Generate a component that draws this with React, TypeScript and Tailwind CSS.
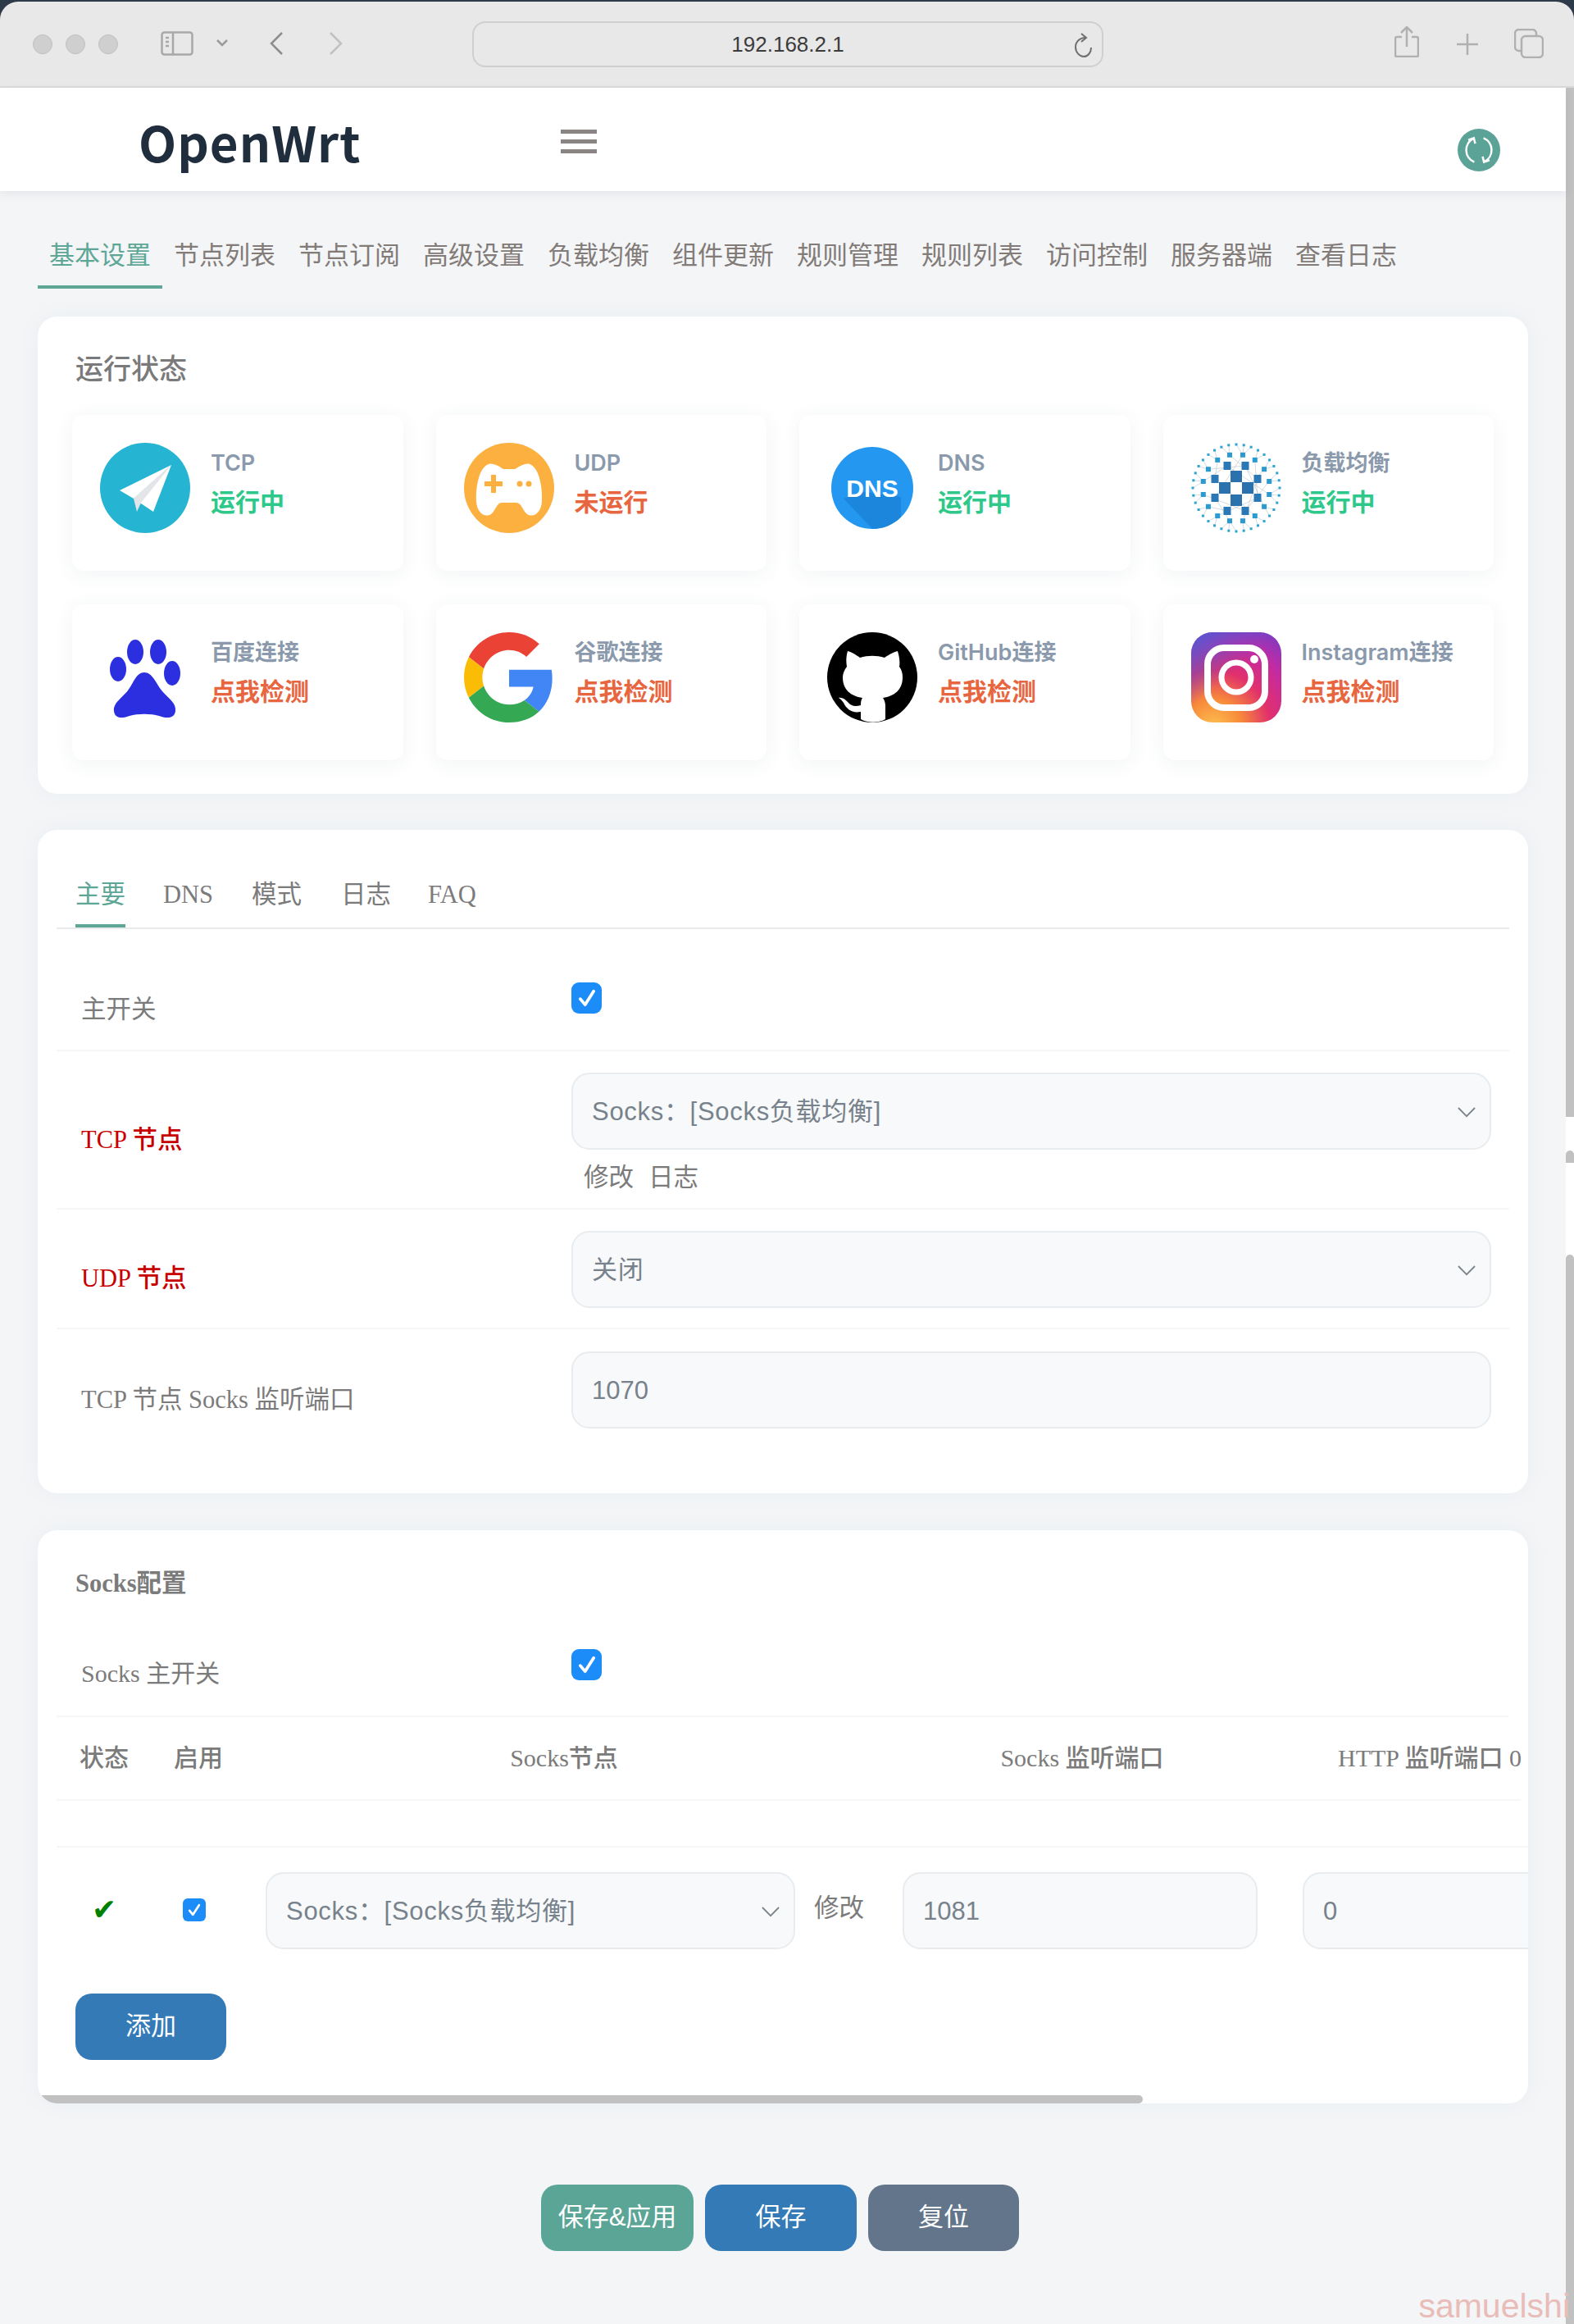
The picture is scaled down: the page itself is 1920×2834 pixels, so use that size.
import type { ReactNode } from "react";

const tabs = ["基本设置", "节点列表", "节点订阅", "高级设置", "负载均衡", "组件更新", "规则管理", "规则列表", "访问控制", "服务器端", "查看日志"];

const PlaneIcon = () => (
  <svg viewBox="0 0 110 110" className="w-full h-full">
    <circle cx="55" cy="55" r="55" fill="#25b5d3" />
    <polygon points="87,27 24,58 41,68" fill="#fff" />
    <polygon points="87,27 41,68 65,84" fill="#fff" />
    <polygon points="87,27 41,68 45,84 50,73" fill="#e3e5e8" />
  </svg>
);

const GamepadIcon = () => (
  <svg viewBox="0 0 110 110" className="w-full h-full">
    <circle cx="55" cy="55" r="55" fill="#fbb040" />
    <path d="M30 26C35 24 45 30 48 32L62 32C66 30 75 24 80 26C92 30 96 55 95 72C94 85 85 92 77 87C71 82 70 73 64 73L46 73C40 73 39 82 33 87C25 92 16 85 15 72C14 55 18 30 30 26Z" fill="#fff" />
    <path d="M33 39h6v8h8v6h-8v8h-6v-8h-8v-6h8z" fill="#fbb040" />
    <circle cx="68" cy="50" r="3.5" fill="#fbb040" />
    <circle cx="79" cy="50" r="3.5" fill="#fbb040" />
  </svg>
);

const DnsIcon = () => (
  <svg viewBox="0 0 110 110" className="w-full h-full">
    <defs>
      <clipPath id="dnsClip">
        <circle cx="55" cy="55" r="50" />
      </clipPath>
    </defs>
    <circle cx="55" cy="55" r="50" fill="#2498f0" />
    <polygon points="20,68 45,60 90,66 90,110 60,110" fill="#1c86dc" clipPath="url(#dnsClip)" />
    <text x="55" y="66" textAnchor="middle" fontSize="30" fontWeight="700" fill="#fff" fontFamily="'Liberation Sans',sans-serif">DNS</text>
  </svg>
);

const LoadBalanceIcon = () => {
  const big = [[0, -14], [0, 15], [-14, 0], [14, 0]];
  const mid = [[-11, -27], [11, -27], [-26, -11], [26, -11], [-26, 12], [26, 12], [-11, 28], [11, 28]];
  const ring = Array.from({ length: 16 }, (_, i) => {
    const a = ((i + 0.5) / 16) * Math.PI * 2;
    return [Math.cos(a) * 41, Math.sin(a) * 41];
  });
  const outer = Array.from({ length: 36 }, (_, i) => {
    const a = (i / 36) * Math.PI * 2;
    return [Math.cos(a) * 53, Math.sin(a) * 53];
  });
  return (
    <svg viewBox="-55 -55 110 110" className="w-full h-full">
      <g stroke="#a9b4bd" strokeWidth="0.5">
        {ring.map(([x, y], i) => (
          <line key={i} x1={x} y1={y} x2={mid[i % 8][0]} y2={mid[i % 8][1]} />
        ))}
        {outer.map(([x, y], i) => (
          <line key={i} x1={x} y1={y} x2={ring[Math.floor(i / 2.25)][0]} y2={ring[Math.floor(i / 2.25)][1]} />
        ))}
      </g>
      {big.map(([x, y], i) => (
        <rect key={i} x={x - 7} y={y - 7} width="14" height="14" fill="#2a72ae" />
      ))}
      {mid.map(([x, y], i) => (
        <rect key={i} x={x - 4.5} y={y - 5} width="9" height="10" fill="#2a78b5" />
      ))}
      {ring.map(([x, y], i) => (
        <rect key={i} x={x - 3} y={y - 3} width="6" height="6" fill="#2a9ad0" />
      ))}
      {outer.map(([x, y], i) => (
        <rect key={i} x={x - 1.5} y={y - 1.5} width="3" height="3" fill="#2ba5d3" />
      ))}
    </svg>
  );
};

const PawIcon = () => (
  <svg viewBox="0 0 110 110" className="w-full h-full">
    <g fill="#2b2fe0">
      <ellipse cx="22" cy="45" rx="10" ry="15" />
      <ellipse cx="43" cy="24" rx="10" ry="15" />
      <ellipse cx="71" cy="24" rx="10" ry="15" />
      <ellipse cx="88" cy="50" rx="10" ry="15" />
      <path d="M54 49C64 49 68 62 76 72C84 81 93 86 92 96C91 106 80 105 72 102C62 99 46 99 36 102C28 105 18 106 17 96C16 86 27 80 34 71C41 62 44 49 54 49Z" />
    </g>
  </svg>
);

const GoogleIcon = () => (
  <svg viewBox="0 0 48 48" className="w-full h-full">
    <path fill="#EA4335" d="M24 9.5c3.54 0 6.71 1.22 9.21 3.6l6.85-6.85C35.9 2.38 30.47 0 24 0 14.62 0 6.51 5.38 2.56 13.22l7.98 6.19C12.43 13.72 17.74 9.5 24 9.5z" />
    <path fill="#4285F4" d="M46.98 24.55c0-1.57-.15-3.09-.38-4.55H24v9.02h12.94c-.58 2.96-2.26 5.48-4.78 7.18l7.73 6c4.51-4.18 7.09-10.36 7.09-17.65z" />
    <path fill="#FBBC05" d="M10.53 28.59c-.48-1.45-.76-2.99-.76-4.59s.27-3.14.76-4.59l-7.98-6.19C.92 16.46 0 20.12 0 24c0 3.88.92 7.54 2.56 10.78l7.97-6.19z" />
    <path fill="#34A853" d="M24 48c6.48 0 11.93-2.13 15.89-5.81l-7.73-6c-2.15 1.45-4.92 2.3-8.16 2.3-6.26 0-11.57-4.22-13.47-9.91l-7.98 6.19C6.51 42.62 14.62 48 24 48z" />
  </svg>
);

const InstagramIcon = () => (
  <svg viewBox="0 0 110 110" className="w-full h-full">
    <defs>
      <radialGradient id="igBase" cx="0.25" cy="1.05" r="1.25">
        <stop offset="0" stopColor="#fdc04f" />
        <stop offset="0.25" stopColor="#f78a3a" />
        <stop offset="0.5" stopColor="#e1306c" />
        <stop offset="0.75" stopColor="#c32aa3" />
        <stop offset="1" stopColor="#7a3cc4" />
      </radialGradient>
      <linearGradient id="igTop" x1="0" y1="0" x2="0.4" y2="0.5">
        <stop offset="0" stopColor="#4f5bd5" />
        <stop offset="1" stopColor="#4f5bd5" stopOpacity="0" />
      </linearGradient>
    </defs>
    <rect width="110" height="110" rx="26" fill="url(#igBase)" />
    <rect width="110" height="110" rx="26" fill="url(#igTop)" />
    <rect x="20" y="19" width="70" height="73" rx="20" fill="none" stroke="#fff" strokeWidth="8" />
    <circle cx="55" cy="55" r="18" fill="none" stroke="#fff" strokeWidth="7" />
    <circle cx="77" cy="33" r="5" fill="#fff" />
  </svg>
);

const GithubIcon = () => (
  <svg viewBox="0 0 110 110" className="w-full h-full">
    <defs>
      <clipPath id="ghClip">
        <circle cx="55" cy="55" r="55" />
      </clipPath>
    </defs>
    <circle cx="55" cy="55" r="55" fill="#000" />
    <path clipPath="url(#ghClip)" fill="#fff" d="M25 23C30 24 36 28 40 31C50 28 60 28 70 31C74 28 81 24 86 23C88 30 89 36 88 42C91 46 92 50 92 55C92 70 82 78 68 80C70 83 71 86 71 90L71 106C62 111 50 111 41 106L41 97C30 99 24 94 20 86C18 83 16 81 14 80C18 79 22 82 25 85C29 90 34 91 41 89C41 86 41 83 43 80C29 78 19 70 19 55C19 50 21 46 24 42C23 36 23 30 25 23Z" />
  </svg>
);

const statusCards = [
  { icon: <PlaneIcon />, label: "TCP", value: "运行中", ok: true },
  { icon: <GamepadIcon />, label: "UDP", value: "未运行", ok: false },
  { icon: <DnsIcon />, label: "DNS", value: "运行中", ok: true },
  { icon: <LoadBalanceIcon />, label: "负载均衡", value: "运行中", ok: true },
  { icon: <PawIcon />, label: "百度连接", value: "点我检测", ok: false },
  { icon: <GoogleIcon />, label: "谷歌连接", value: "点我检测", ok: false },
  { icon: <GithubIcon />, label: "GitHub连接", value: "点我检测", ok: false },
  { icon: <InstagramIcon />, label: "Instagram连接", value: "点我检测", ok: false },
];

const StatusCard = ({ icon, label, value, ok }: { icon: ReactNode; label: string; value: string; ok: boolean }) => (
  <div className="flex h-[190px] rounded-[14px] bg-white pl-[34px] pt-[34px] shadow-[0_4px_24px_rgba(60,80,100,0.07)]">
    <div className="h-[110px] w-[110px] shrink-0">{icon}</div>
    <div className="ml-[25px]">
      <div className="mt-[7px] [font-family:'Inter','Noto_Sans_CJK_SC',sans-serif] text-[27px] leading-[36px] font-semibold text-[#8a99ab]">{label}</div>
      <div className={`mt-[10px] text-[30px] leading-[40px] font-bold ${ok ? "text-[#2ec98a]" : "text-[#e8663f]"}`}>{value}</div>
    </div>
  </div>
);

const Checkbox = ({ small }: { small?: boolean }) => (
  <div className={`flex items-center justify-center bg-[#1c8cf8] ${small ? "h-[28px] w-[28px] rounded-[6px]" : "h-[38px] w-[37px] rounded-[9px]"}`}>
    <svg viewBox="0 0 24 24" className={small ? "h-[20px] w-[20px]" : "h-[28px] w-[28px]"} fill="none" stroke="#fff" strokeWidth="3.2" strokeLinecap="round" strokeLinejoin="round">
      <path d="M5 13l5 6L19 5" />
    </svg>
  </div>
);

const fieldClass = "flex h-[94px] items-center rounded-[22px] border-2 border-[#e9ecef] bg-[#f8f9fa] pt-[3px] text-[31px] text-[#77828c]";

const Chevron = () => (
  <svg viewBox="0 0 24 14" className="h-[13px] w-[22px] shrink-0" fill="none" stroke="#7d858c" strokeWidth="2">
    <path d="M1 1l11 11L23 1" />
  </svg>
);

const SelectField = ({ text, className }: { text: string; className: string }) => (
  <div className={`${fieldClass} ${className} justify-between pl-[23px] pr-[17px]`}>
    <span className="tracking-[0.7px]">{text}</span>
    <Chevron />
  </div>
);

const InputField = ({ text, className }: { text: string; className: string }) => (
  <div className={`${fieldClass} ${className} pl-[23px]`}>{text}</div>
);

const serif = "[font-family:'Liberation_Serif','Noto_Sans_CJK_SC',serif]";

const FormRow = ({ label, labelTop, valueTop, height, red, children, last }: { label: string; labelTop: string; valueTop: string; height: string; red?: boolean; children: ReactNode; last?: boolean }) => (
  <div className={`flex pl-[30px] pr-[22px] ${height} ${last ? "" : "border-b-2 border-[#f5f6f7]"}`}>
    <div className={`w-[598px] shrink-0 ${labelTop} ${serif} text-[30.5px] leading-[36px] ${red ? "font-medium text-[#c80000]" : "text-[#7b7b7b]"}`}>{label}</div>
    <div className={`flex-1 ${valueTop}`}>{children}</div>
  </div>
);

const Card = ({ className, children }: { className: string; children: ReactNode }) => (
  <div className={`mx-[46px] rounded-[24px] bg-white shadow-[0_0_30px_rgba(60,80,100,0.04)] ${className}`}>{children}</div>
);

const Toolbar = () => (
  <div className="relative mt-[2px] flex h-[105px] shrink-0 items-start rounded-t-[22px] border-b-2 border-[#dadada] bg-[#e8e8e8]">
    <div className="ml-[40px] mt-[40px] flex gap-[16px]">
      <div className="h-[24px] w-[24px] rounded-full border border-[#bfbfbf] bg-[#cfcfcf]" />
      <div className="h-[24px] w-[24px] rounded-full border border-[#bfbfbf] bg-[#cfcfcf]" />
      <div className="h-[24px] w-[24px] rounded-full border border-[#bfbfbf] bg-[#cfcfcf]" />
    </div>
    <svg viewBox="0 0 40 30" className="ml-[52px] mt-[36px] h-[30px] w-[40px]" fill="none" stroke="#a8a8a8" strokeWidth="2.5">
      <rect x="1.5" y="1.5" width="37" height="27" rx="3" />
      <path d="M15 1.5v27M6 8h4M6 13h4M6 18h4" />
    </svg>
    <svg viewBox="0 0 14 9" className="ml-[28px] mt-[46px] h-[9px] w-[14px]" fill="none" stroke="#9a9a9a" strokeWidth="2.5">
      <path d="M1 1l6 6 6-6" />
    </svg>
    <svg viewBox="0 0 17 28" className="ml-[51px] mt-[37px] h-[28px] w-[17px]" fill="none" stroke="#8d8d8d" strokeWidth="2.5">
      <path d="M15 1L2 14l13 13" />
    </svg>
    <svg viewBox="0 0 17 28" className="ml-[55px] mt-[37px] h-[28px] w-[17px]" fill="none" stroke="#c0c0c0" strokeWidth="2.5">
      <path d="M2 1l13 13L2 27" />
    </svg>
    <div className="ml-[158px] mt-[24px] flex h-[56px] w-[770px] items-center justify-center rounded-[16px] border-2 border-[#cfcfcf] text-[26px] text-[#3c3c3c]">
      192.168.2.1
      <svg viewBox="0 0 24 30" className="absolute left-[1309px] top-[38px] h-[30px] w-[24px]" fill="none" stroke="#6f6f6f" strokeWidth="2">
        <path d="M15 6C8 6 3 11 3 17.5S8 29 13 29s9-5 9-11" />
        <path d="M10 1l6 5-6 5" />
      </svg>
    </div>
    <svg viewBox="0 0 30 38" className="ml-[355px] mt-[30px] h-[38px] w-[30px]" fill="none" stroke="#b0b0b0" strokeWidth="2.5">
      <path d="M9 13H3a2 2 0 0 0-2 2v20a2 2 0 0 0 2 2h24a2 2 0 0 0 2-2V15a2 2 0 0 0-2-2h-6M15 25V2M8 8l7-7 7 7" />
    </svg>
    <svg viewBox="0 0 28 28" className="ml-[45px] mt-[38px] h-[28px] w-[28px]" fill="none" stroke="#b0b0b0" strokeWidth="2.5">
      <path d="M14 1v26M1 14h26" />
    </svg>
    <svg viewBox="0 0 36 36" className="ml-[43px] mt-[33px] h-[36px] w-[36px]" fill="none" stroke="#b0b0b0" strokeWidth="2.5">
      <rect x="9" y="9" width="26" height="26" rx="5" />
      <path d="M9 27H6a5 5 0 0 1-5-5V6a5 5 0 0 1 5-5h16a5 5 0 0 1 5 5v3" />
    </svg>
  </div>
);

const Header = () => (
  <div className="relative flex h-[126px] items-start bg-white shadow-[0_4px_10px_rgba(60,70,80,0.08)]">
    <div className="ml-[169px] mt-[27px] [font-family:'Noto_Sans_CJK_SC',sans-serif] text-[60px] leading-[76px] font-bold tracking-[1px] text-[#1f2d3d]">OpenWrt</div>
    <div className="absolute left-[684px] top-[51px] flex w-[44px] flex-col gap-[7px]">
      <div className="h-[5px] bg-[#8a8583]" />
      <div className="h-[5px] bg-[#8a8583]" />
      <div className="h-[5px] bg-[#8a8583]" />
    </div>
    <div className="ml-auto mr-[80px] mt-[50px] flex h-[52px] w-[52px] items-center justify-center rounded-full bg-[#5ba397]">
      <svg viewBox="0 0 32 32" className="h-[36px] w-[36px]" fill="none" stroke="#fff" strokeWidth="2.2">
        <path d="M11 29A14 14 0 0 1 10 3.500M4.500 5l6-2 1.500 6" />
        <path d="M21 3A14 14 0 0 1 22 28.500M27.500 27l-6 2-1.500-6" />
      </svg>
    </div>
  </div>
);

const PageScrollbar = () => (
  <div className="flex w-[10px] shrink-0 flex-col bg-white">
    <div className="h-[1255px] bg-[#c1c1c1]" />
    <div className="mt-[41px] h-[15px] rounded-t-[6px] bg-[#c1c1c1]" />
    <div className="mt-[112px] flex-1 rounded-t-[6px] bg-[#c1c1c1]" />
  </div>
);

export default function App() {
  return (
    <div className="relative flex h-[2834px] w-[1920px] flex-col overflow-hidden bg-[#2d3a4a] [font-family:'Liberation_Sans','Noto_Sans_CJK_SC',sans-serif]">
      <Toolbar />
      <div className="flex flex-1">
        <div className="w-[1910px] min-w-0 bg-[#f3f5f7]">
          <Header />

          <div className="ml-[46px] mt-[59px] flex">
            {tabs.map((t, i) => (
              <div key={t} className={`box-content flex h-[54px] items-start justify-center pt-[2px] text-[31px] leading-[36px] text-nowrap ${i === 0 ? "w-[152px] border-b-4 border-[#5ea797] text-[#5ea797]" : "w-[152px] text-[#827b78]"}`}>
                {t}
              </div>
            ))}
          </div>

          <Card className="mt-[34px] h-[582px] px-[42px] pt-[46px]">
            <div className="ml-[4px] text-[34px] leading-[36px] font-medium text-[#7a7a7a]">运行状态</div>
            <div className="mt-[38px] grid grid-cols-4 gap-x-[40px] gap-y-[41px]">
              {statusCards.map((c) => (
                <StatusCard key={c.label} {...c} />
              ))}
            </div>
          </Card>

          <Card className="mt-[44px] h-[809px] px-[23px]">
            <div className={`flex h-[121px] border-b-2 border-[#e8eaec] pl-[23px] pt-[61px] ${serif} text-[30.5px] leading-[36px] text-[#7b7b7b]`}>
              <div className="h-[58px] border-b-4 border-[#5ea797] text-[#5ea797]">主要</div>
              <div className="ml-[46px]">DNS</div>
              <div className="ml-[47px]">模式</div>
              <div className="ml-[48px]">日志</div>
              <div className="ml-[45px]">FAQ</div>
            </div>
            <FormRow label="主开关" labelTop="pt-[80px]" valueTop="pt-[65px]" height="h-[149px]">
              <Checkbox />
            </FormRow>
            <FormRow label="TCP 节点" red labelTop="pt-[90px]" valueTop="pt-[26px]" height="h-[193px]">
              <SelectField text="Socks：[Socks负载均衡]" className="w-full" />
              <div className={`ml-[15px] mt-[16px] flex gap-[18px] ${serif} text-[30.5px] leading-[36px] text-[#7b7b7b]`}>
                <span>修改</span>
                <span>日志</span>
              </div>
            </FormRow>
            <FormRow label="UDP 节点" red labelTop="pt-[66px]" valueTop="pt-[26px]" height="h-[146px]">
              <SelectField text="关闭" className="w-full" />
            </FormRow>
            <FormRow label="TCP 节点 Socks 监听端口" labelTop="pt-[68px]" valueTop="pt-[27px]" height="h-[148px]" last>
              <InputField text="1070" className="w-full" />
            </FormRow>
          </Card>

          <Card className="relative mt-[45px] h-[699px] overflow-hidden">
            <div className={`ml-[46px] pt-[47px] ${serif} text-[30.5px] leading-[36px] font-bold text-[#7b7b7b]`}>Socks配置</div>
            <div className="ml-[23px] mr-[24px] flex h-[145px] border-b-2 border-[#f5f6f7] pl-[30px]">
              <div className={`w-[598px] shrink-0 pt-[74px] ${serif} text-[30px] leading-[36px] text-[#7b7b7b]`}>Socks 主开关</div>
              <div className="pt-[62px]">
                <Checkbox />
              </div>
            </div>
            <div className={`ml-[23px] mr-[9px] grid h-[102px] grid-cols-[116px_100px_806px_458px_1fr] items-center border-b-2 border-[#f5f6f7] ${serif} text-[30px] leading-[36px] font-medium text-nowrap text-[#7b7b7b]`}>
              <div className="text-center">状态</div>
              <div className="pl-[27px]">启用</div>
              <div className="text-center">Socks节点</div>
              <div className="text-center">Socks 监听端口</div>
              <div className="pl-[83px]">HTTP 监听端口 0</div>
            </div>
            <div className="ml-[23px] h-[57px] border-b-2 border-[#f5f6f7]" />
            <div className="ml-[23px] grid h-[178px] grid-cols-[116px_100px_806px_458px_1fr] items-start pt-[30px]">
              <div className="pt-[24px] text-center [font-family:'DejaVu_Sans',sans-serif] text-[36px] leading-[44px] text-[#008000]">✔</div>
              <div className="flex justify-center pl-[4px] pt-[32px]">
                <Checkbox small />
              </div>
              <div className="flex items-start pl-[39px]">
                <SelectField text="Socks：[Socks负载均衡]" className="w-[646px] shrink-0" />
                <span className={`ml-[23px] pt-[26px] ${serif} text-[30.5px] leading-[36px] text-[#7b7b7b]`}>修改</span>
              </div>
              <div className="pl-[10px]">
                <InputField text="1081" className="w-[433px]" />
              </div>
              <div className="pl-[40px]">
                <InputField text="0" className="w-[400px]" />
              </div>
            </div>
            <div className="ml-[46px] flex h-[81px] w-[184px] items-center justify-center rounded-[20px] bg-[#337ab7] text-[31px] text-white">添加</div>
            <div className="absolute bottom-0 left-0 h-[10px] w-[1348px] rounded-r-[5px] bg-[#c1c1c1]" />
          </Card>

          <div className="ml-[660px] mt-[99px] flex gap-[14px] text-[31px] text-white">
            <div className="flex h-[81px] w-[186px] items-center justify-center rounded-[20px] bg-[#5ba597]">保存&amp;应用</div>
            <div className="flex h-[81px] w-[185px] items-center justify-center rounded-[20px] bg-[#337ab7]">保存</div>
            <div className="flex h-[81px] w-[184px] items-center justify-center rounded-[20px] bg-[#62758a]">复位</div>
          </div>
        </div>
        <PageScrollbar />
      </div>
      <div className="absolute bottom-[0px] right-[5px] text-[41px] leading-[44px] text-[#e9bcb8]">samuelshi</div>
    </div>
  );
}
